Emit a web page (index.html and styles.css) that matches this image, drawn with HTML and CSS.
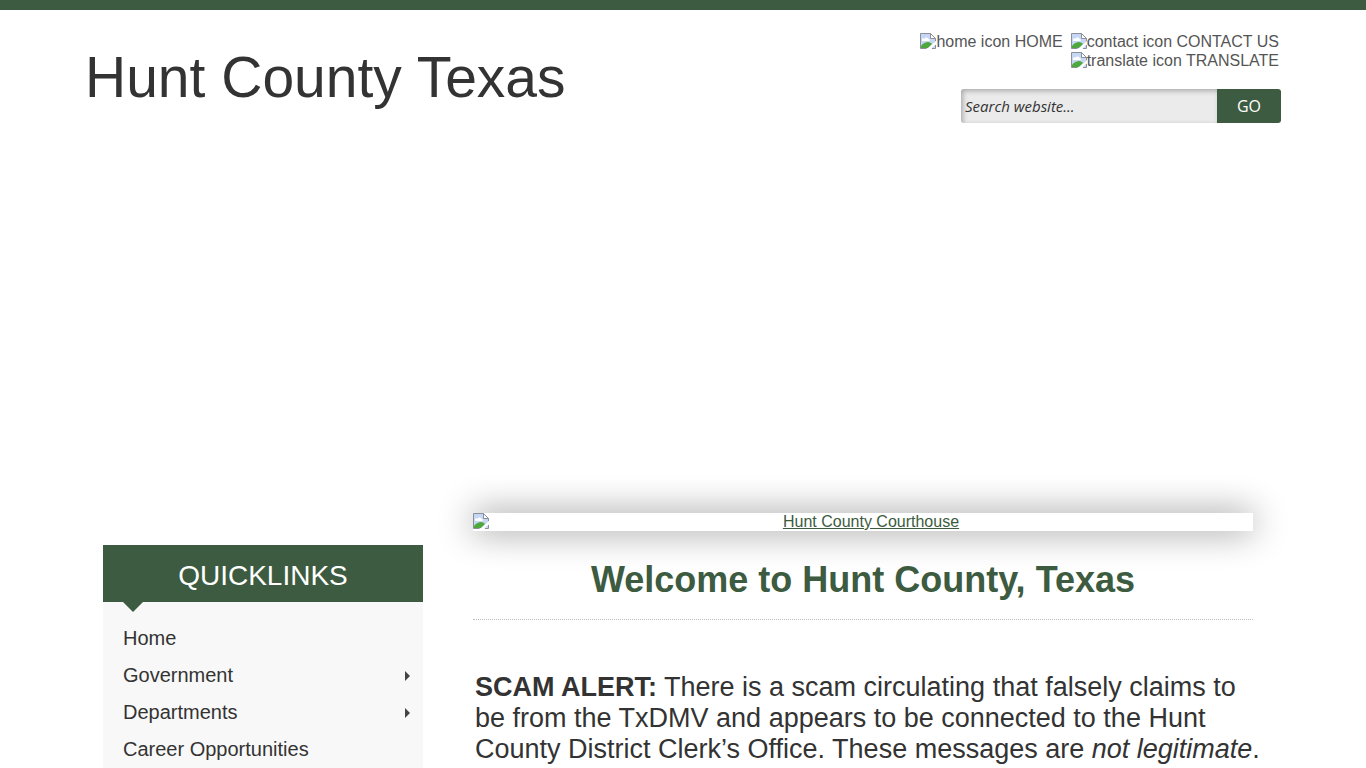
FILE: index.html
```html
<!DOCTYPE html>
<html lang="en">

<head>
    <meta charset="UTF-8">
    <meta name="viewport" content="width=device-width, initial-scale=1.0">
    <title>Hunt County Texas</title>
    <link rel="stylesheet" href="styles.css">
</head>

<body>
    <svg class="symbols" aria-hidden="true">
        <symbol id="picture" viewBox="0 0 16 16">
            <path d="M.5 .5h10l5 5v10H.5z" fill="#c6d7f5"/>
            <path d="M2 7c0-2 2-2 2.500-1 .5-2 3.500-2 4 0 1.500 0 2 2 .5 2H3C2 8 2 7.500 2 7z" fill="#fff"/>
            <path d="M1 15v-2c2-3 5-4 7-4 2 0 3 1 4 2l-4 4z" fill="#4fa83d"/>
            <path d="M.5 15.500V.5h10l5 5v3M.5 15.500h6M12 15.500h3.500V12" fill="none" stroke="#8b8f98"/>
            <path d="M10.500 .5v5h5z" fill="#fff" stroke="#8b8f98"/>
            <path d="M7 16l9-8v3l-5 5z" fill="#fff"/>
        </symbol>
    </svg>

    <header class="header">
        <h1 class="site-title">Hunt County Texas</h1>
        <div class="tools">
            <nav class="top-links">
                <a href="#"><svg class="icon"><use href="#picture"/></svg>home icon HOME</a>
                <a href="#"><svg class="icon"><use href="#picture"/></svg>contact icon CONTACT US</a>
                <a href="#"><svg class="icon"><use href="#picture"/></svg>translate icon TRANSLATE</a>
            </nav>
            <form class="search">
                <input type="text" class="search-box" placeholder="Search website..." aria-label="Search website">
                <button type="submit" class="search-button">GO</button>
            </form>
        </div>
    </header>

    <div class="content">
        <aside class="sidebar">
            <h2 class="sidebar-title">QUICKLINKS</h2>
            <ul class="quicklinks">
                <li><a href="#">Home</a></li>
                <li><a href="#" class="has-menu">Government</a></li>
                <li><a href="#" class="has-menu">Departments</a></li>
                <li><a href="#">Career Opportunities</a></li>
            </ul>
        </aside>

        <main class="main">
            <a href="#" class="slide">
                <svg class="icon"><use href="#picture"/></svg>
                <span class="slide-text">Hunt County Courthouse</span>
            </a>
            <h2 class="welcome">Welcome to Hunt County, Texas</h2>
            <p class="alert"><strong>SCAM ALERT:</strong> There is a scam circulating that falsely claims to be from the TxDMV and appears to be connected to the Hunt County District Clerk’s Office. These messages are <em>not legitimate</em>.</p>
        </main>
    </div>
</body>

</html>
```

FILE: styles.css
```css
* {
    box-sizing: border-box;
}

body {
    display: flex;
    flex-direction: column;
    min-height: 100vh;
    margin: 0;
    border-top: 10px solid #3c5b40;
    font-family: "Liberation Sans", Arial, sans-serif;
    font-size: 16px;
    line-height: 18px;
    color: #333;
    background-color: #fff;
}

h1,
h2,
p,
ul {
    margin: 0;
    padding: 0;
}

.symbols {
    position: absolute;
    width: 0;
    height: 0;
}

.icon {
    flex: none;
    width: 16px;
    height: 16px;
}

.header {
    display: flex;
    justify-content: space-between;
    width: 100%;
    max-width: 1200px;
    min-height: 503px;
    margin: 0 auto;
    padding: 22px 2px 0;
}

.site-title {
    padding-top: 12px;
    font-size: 57px;
    font-weight: normal;
    line-height: 66px;
}

.tools {
    width: 362px;
}

.top-links {
    display: flex;
    flex-wrap: wrap;
    justify-content: flex-end;
    column-gap: 8px;
    padding-right: 2px;
}

.top-links a {
    display: flex;
    line-height: 19px;
    color: #555;
    text-decoration: none;
}

.top-links .icon {
    margin-top: 1px;
}

.search {
    display: flex;
    width: 320px;
    height: 34px;
    margin: 19px 0 0 auto;
    border-radius: 3px;
    overflow: hidden;
}

.search-box,
.search-button {
    border: none;
    font-family: "Open Sans", "Noto Sans", sans-serif;
    font-size: 16px;
}

.search-box {
    flex: 1;
    min-width: 0;
    padding: 0 4px;
    font-size: 15px;
    font-style: italic;
    background-color: #ebebeb;
    box-shadow: inset 2px 2px 5px #aaa;
}

.search-box::placeholder {
    color: #333;
}

.search-button {
    width: 64px;
    color: #fff;
    background-color: #3c5b40;
    cursor: pointer;
}

.content {
    display: flex;
    flex: 1;
    gap: 50px;
    width: 100%;
    max-width: 1200px;
    margin: 0 auto;
    padding: 0 30px 0 20px;
}

.sidebar {
    flex: none;
    width: 320px;
    margin-top: 32px;
    background-color: #f8f8f8;
}

.sidebar-title {
    position: relative;
    padding: 14px 0 10px;
    font-size: 28px;
    font-weight: normal;
    line-height: 33px;
    text-align: center;
    color: #fff;
    background-color: #3c5b40;
}

.sidebar-title::after {
    content: "";
    position: absolute;
    top: 100%;
    left: 20px;
    border: 10px solid transparent;
    border-top-color: #3c5b40;
    border-bottom: none;
}

.quicklinks {
    padding-top: 18px;
    list-style: none;
}

.quicklinks a {
    display: flex;
    align-items: center;
    justify-content: space-between;
    padding: 7px 13px 7px 20px;
    font-size: 20px;
    line-height: 23px;
    color: #333;
    text-decoration: none;
}

.has-menu::after {
    content: "";
    border: 5px solid transparent;
    border-left-color: #444;
    border-right: none;
}

.main {
    flex: 1;
    min-width: 0;
}

.slide {
    display: flex;
    color: #3c5b40;
    background-color: #fff;
    box-shadow: 0 0 35px #888;
}

.slide-text {
    flex: 1;
    text-align: center;
    text-decoration: underline;
}

.welcome {
    padding: 28px 0 18px;
    border-bottom: 1px dotted #bbb;
    font-size: 36px;
    line-height: 42px;
    text-align: center;
    color: #3c5b40;
}

.alert {
    margin-right: -10px;
    padding: 52px 0 0 2px;
    font-size: 27px;
    line-height: 31px;
}
```
